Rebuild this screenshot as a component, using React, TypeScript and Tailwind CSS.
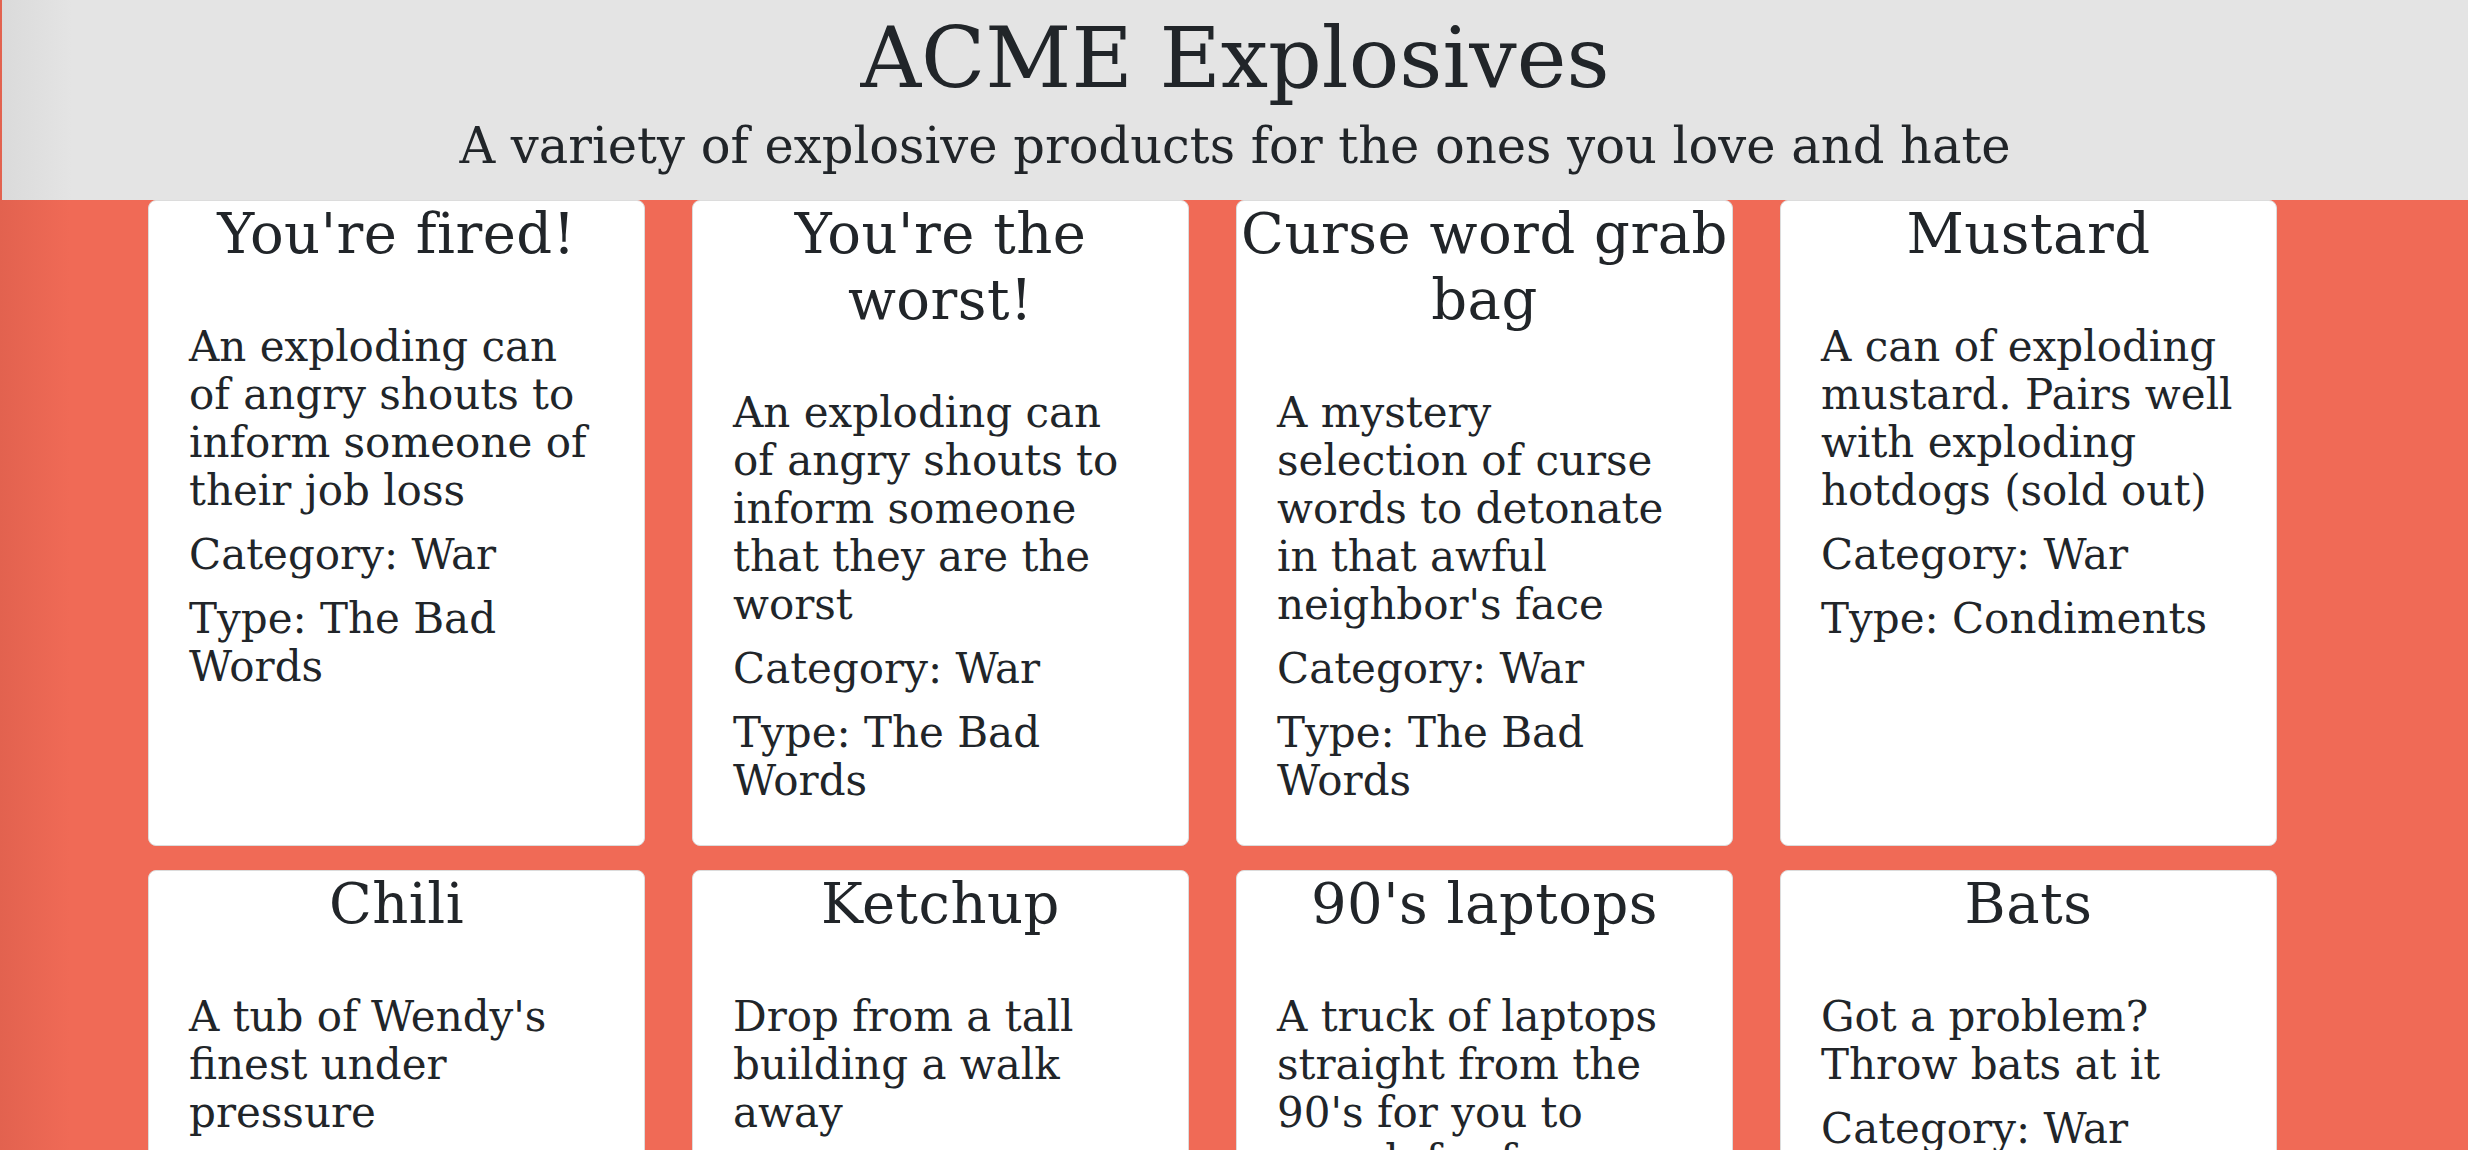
const products = [
  {
    name: "You're fired!",
    description: 'An exploding can of angry shouts to inform someone of their job loss',
    category: 'War',
    type: 'The Bad Words',
  },
  {
    name: "You're the worst!",
    description: 'An exploding can of angry shouts to inform someone that they are the worst',
    category: 'War',
    type: 'The Bad Words',
  },
  {
    name: 'Curse word grab bag',
    description: "A mystery selection of curse words to detonate in that awful neighbor's face",
    category: 'War',
    type: 'The Bad Words',
  },
  {
    name: 'Mustard',
    description: 'A can of exploding mustard. Pairs well with exploding hotdogs (sold out)',
    category: 'War',
    type: 'Condiments',
  },
  {
    name: 'Chili',
    description: "A tub of Wendy's finest under pressure",
    category: 'War',
    type: 'Condiments',
  },
  {
    name: 'Ketchup',
    description: 'Drop from a tall building a walk away',
    category: 'War',
    type: 'Condiments',
  },
  {
    name: "90's laptops",
    description: "A truck of laptops straight from the 90's for you to smash for fun",
    category: 'War',
    type: 'Electronics',
  },
  {
    name: 'Bats',
    description: 'Got a problem? Throw bats at it',
    category: 'War',
    type: 'Animals',
  },
];

type Product = (typeof products)[number];

function ProductCard({ product }: { product: Product }) {
  return (
    <article className="flex flex-col rounded-[8px] border border-[#dcdcdc] bg-white">
      <h3 className="mb-[16px] text-center text-[56px] leading-[66px] tracking-[0.5px]">{product.name}</h3>
      <div className="flex flex-col gap-[16px] px-[40px] pt-[40px] pb-[40px] text-[42px] leading-[48px]">
        <p>{product.description}</p>
        <p>Category: {product.category}</p>
        <p>Type: {product.type}</p>
      </div>
    </article>
  );
}

export default function App() {
  return (
    <div className="min-h-screen bg-[linear-gradient(90deg,#e2624f_0px,#f06a56_70px)] font-['DejaVu_Serif',serif] text-[#212529]">
      <header className="ml-[2px] bg-[linear-gradient(90deg,#dadada_0px,#e4e4e4_70px)] pt-[8px] pb-[24px] text-center">
        <h1 className="text-[84px] leading-[100px]">ACME Explosives</h1>
        <p className="mt-[9px] text-[49.5px] leading-[59px]">A variety of explosive products for the ones you love and hate</p>
      </header>

      <main className="ml-[148px] grid w-[2129px] grid-cols-4 gap-x-[47px] gap-y-[24px] pb-10">
        {products.map((product) => (
          <ProductCard key={product.name} product={product} />
        ))}
      </main>
    </div>
  );
}
